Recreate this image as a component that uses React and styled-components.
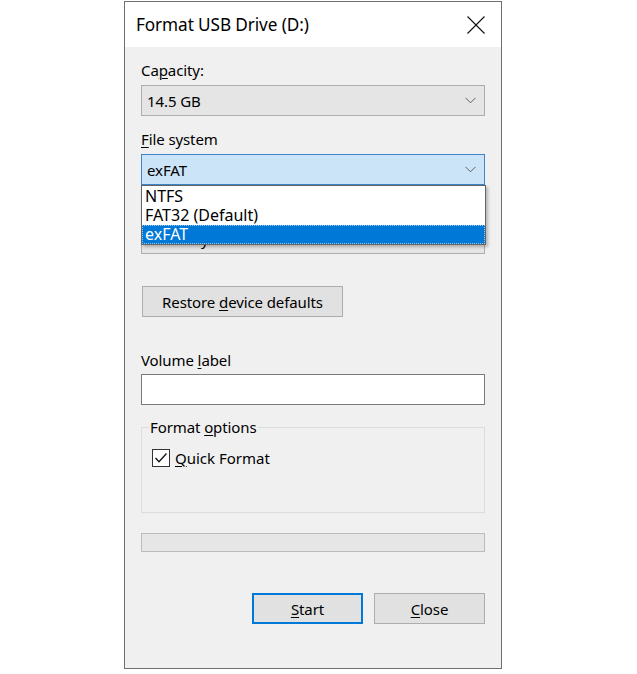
import React from "react";
import styled, { createGlobalStyle } from "styled-components";

const Global = createGlobalStyle`
  html, body { margin: 0; padding: 0; background: #ffffff; }
  body { font-family: "Noto Sans", "Open Sans", sans-serif; color: #000; }
`;

const Window = styled.div`
  margin: 1px 0 0 124px;
  width: 378px;
  height: 668px;
  box-sizing: border-box;
  border: 1px solid #6f6f6f;
  background: #f0f0f0;
  display: flex;
  flex-direction: column;
`;

const TitleBar = styled.div`
  height: 45px;
  background: #ffffff;
  display: flex;
  align-items: center;
  justify-content: space-between;
  padding-left: 11px;
  flex-shrink: 0;
`;

const Title = styled.div`
  font-size: 17.2px;
  color: #000;
  letter-spacing: -0.1px;
`;

const CloseBtn = styled.div`
  width: 46px;
  height: 45px;
  display: flex;
  align-items: center;
  justify-content: center;
  margin-right: 2px;
`;

const Body = styled.div`
  padding: 12px 16px 0 16px;
  display: flex;
  flex-direction: column;
  font-size: 15px;
`;

const Label = styled.div`
  height: 22px;
  line-height: 22px;
  margin-top: ${(p) => p.$mt || 0}px;
  margin-bottom: ${(p) => p.$mb || 4}px;
  letter-spacing: -0.1px;
`;

const Key = styled.u`
  text-decoration-thickness: 1px;
  text-underline-offset: 2px;
`;

const ComboWrap = styled.div`
  position: relative;
`;

const Combo = styled.div`
  height: 31px;
  box-sizing: border-box;
  border: 1px solid ${(p) => (p.$open ? "#3c86c9" : "#adadad")};
  background: ${(p) => (p.$open ? "#cce4f7" : "#e5e5e5")};
  display: flex;
  align-items: center;
  justify-content: space-between;
  padding: 0 8px 0 5px;
`;

const ComboText = styled.span`
  letter-spacing: -0.1px;
`;

const DropList = styled.div`
  position: absolute;
  left: 0;
  right: -1px;
  top: 31px;
  z-index: 2;
  background: #ffffff;
  border: 1px solid #646464;
  box-shadow: 2px 2px 3px rgba(0, 0, 0, 0.25);
  display: flex;
  flex-direction: column;
  padding-top: 1px;
`;

const DropItem = styled.div`
  height: 19px;
  line-height: 19px;
  padding-left: 3px;
  font-size: 16px;
  background: ${(p) => (p.$selected ? "#0078d7" : "transparent")};
  color: ${(p) => (p.$selected ? "#ffffff" : "#000000")};
  outline: ${(p) => (p.$selected ? "1px dotted #9cc7ef" : "none")};
  outline-offset: -1px;
`;

const Button = styled.div`
  width: ${(p) => p.$w}px;
  height: 31px;
  box-sizing: border-box;
  background: #e1e1e1;
  border: ${(p) => (p.$default ? "2px solid #0078d7" : "1px solid #adadad")};
  display: flex;
  align-items: center;
  justify-content: center;
  letter-spacing: -0.1px;
`;

const RestoreRow = styled.div`
  margin-top: 32px;
  padding-left: 1px;
`;

const TextInput = styled.div`
  height: 31px;
  box-sizing: border-box;
  background: #ffffff;
  border: 1px solid #7a7a7a;
`;

const GroupBox = styled.fieldset`
  margin: 13px 0 0 0;
  padding: 12px 8px 0 10px;
  height: 95px;
  box-sizing: border-box;
  border: 1px solid #dcdcdc;
  position: relative;
  min-width: 0;
`;

const Legend = styled.legend`
  padding: 0 1px;
  margin-left: -3px;
  font-size: 15px;
  line-height: 18px;
  letter-spacing: -0.1px;
`;

const CheckRow = styled.div`
  display: flex;
  align-items: center;
  gap: 5px;
`;

const Box = styled.div`
  width: 18px;
  height: 18px;
  box-sizing: border-box;
  border: 1px solid #333333;
  background: #ffffff;
  display: flex;
  align-items: center;
  justify-content: center;
`;

const Progress = styled.div`
  margin-top: 20px;
  height: 19px;
  box-sizing: border-box;
  background: #e6e6e6;
  border: 1px solid #bcbcbc;
`;

const Footer = styled.div`
  margin-top: 41px;
  display: flex;
  justify-content: flex-end;
  gap: 11px;
`;

const Chevron = () => (
  <svg width="11" height="7" viewBox="0 0 11 7">
    <polyline points="0.5,0.8 5.5,5.8 10.5,0.8" fill="none" stroke="#606060" strokeWidth="1" />
  </svg>
);

export default function App() {
  return (
    <>
      <Global />
      <Window>
        <TitleBar>
          <Title>Format USB Drive (D:)</Title>
          <CloseBtn>
            <svg width="18" height="18" viewBox="0 0 18 18">
              <line x1="0.5" y1="0.5" x2="17.5" y2="17.5" stroke="#111" strokeWidth="1.1" />
              <line x1="17.5" y1="0.5" x2="0.5" y2="17.5" stroke="#111" strokeWidth="1.1" />
            </svg>
          </CloseBtn>
        </TitleBar>
        <Body>
          <Label>
            Ca<Key>p</Key>acity:
          </Label>
          <Combo>
            <ComboText>14.5 GB</ComboText>
            <Chevron />
          </Combo>

          <Label $mt={12}>
            <Key>F</Key>ile system
          </Label>
          <ComboWrap>
            <Combo $open>
              <ComboText>exFAT</ComboText>
              <Chevron />
            </Combo>
            <DropList>
              <DropItem>NTFS</DropItem>
              <DropItem>FAT32 (Default)</DropItem>
              <DropItem $selected>exFAT</DropItem>
            </DropList>
          </ComboWrap>

          {/* allocation unit row sits underneath the open list */}
          <Label $mt={12} />
          <Combo>
            <ComboText>32 kilobytes</ComboText>
            <Chevron />
          </Combo>

          <RestoreRow>
            <Button $w={201}>
              <span>
                Restore <Key>d</Key>evice defaults
              </span>
            </Button>
          </RestoreRow>

          <Label $mt={32} $mb={3}>
            Volume <Key>l</Key>abel
          </Label>
          <TextInput />

          <GroupBox>
            <Legend>
              Format <Key>o</Key>ptions
            </Legend>
            <CheckRow>
              <Box>
                <svg width="14" height="12" viewBox="0 0 14 12">
                  <polyline points="1.5,6 5,9.8 12.5,1.5" fill="none" stroke="#111" strokeWidth="1.3" />
                </svg>
              </Box>
              <span>
                <Key>Q</Key>uick Format
              </span>
            </CheckRow>
          </GroupBox>

          <Progress />

          <Footer>
            <Button $w={111} $default>
              <span>
                <Key>S</Key>tart
              </span>
            </Button>
            <Button $w={111}>
              <span>
                <Key>C</Key>lose
              </span>
            </Button>
          </Footer>
        </Body>
      </Window>
    </>
  );
}
